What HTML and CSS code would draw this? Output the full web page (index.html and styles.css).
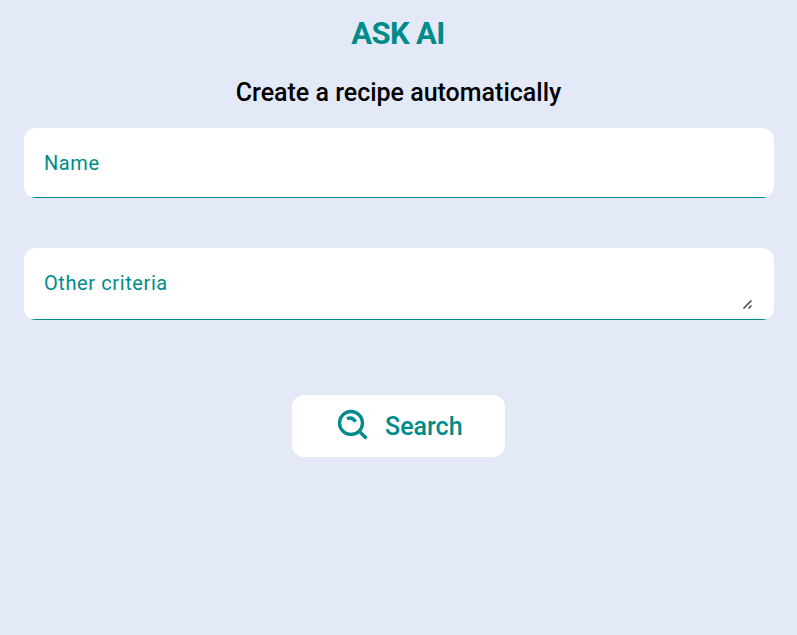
FILE: index.html
```html
<!DOCTYPE html>
<html lang="en">
<head>
<meta charset="utf-8">
<title>Ask AI</title>
<link rel="stylesheet" href="styles.css">
</head>
<body>
<main class="page">
  <h1 class="title">ASK AI</h1>
  <h2 class="subtitle">Create a recipe automatically</h2>
  <form class="form">
    <div class="field field-name"><span class="label">Name</span></div>
    <div class="field field-criteria">
      <span class="label">Other criteria</span>
      <svg class="grip" viewBox="0 0 10 10"><path d="M0.5 8.500 8.500 0.500M5.500 8.500 8.500 5.500"/></svg>
    </div>
    <button class="search" type="button">
      <svg class="icon" viewBox="0 0 32 32"><circle cx="14" cy="14" r="11.5"/><path d="M22 22 29.500 29.500M10 9.700Q15.500 7.300 18.500 12.700"/></svg>
      <span class="search-text">Search</span>
    </button>
  </form>
</main>
</body>
</html>
```
FILE: styles.css
```css
* { box-sizing: border-box; }
body { margin: 0; min-height: 635px; background: #e3e9f7; font-family: Roboto, sans-serif; }
.page { padding: 14px 23px 0 24px; }
.title { margin: 0 2px 0 0; height: 40px; line-height: 39px; font-size: 31px; font-weight: 700; letter-spacing: -0.6px; text-align: center; color: #008b8b; }
.subtitle { margin: 22px 1px 0 0; height: 32px; line-height: 33px; font-size: 25px; font-weight: 500; text-align: center; color: #000; }
.form { margin-top: 20px; display: flex; flex-direction: column; }
.field { display: flex; justify-content: space-between; padding: 0 20px; border-radius: 12px; background: linear-gradient(#008b8b, #008b8b) bottom / 100% 1px no-repeat #fff; }
.field-name { height: 70px; }
.field-criteria { height: 72px; margin-top: 50px; }
.label { line-height: 70px; font-size: 20px; letter-spacing: 0.6px; color: #008b8b; }
.grip { width: 10px; height: 10px; margin: 52px 1px 0 0; fill: none; stroke: #555; stroke-width: 1.7; }
.search { align-self: center; display: flex; align-items: center; gap: 16px; width: 213px; height: 62px; margin: 75px 1px 0 0; padding: 0 42px 0 45px; border: 0; border-radius: 12px; background: #fff; color: #008b8b; font: 500 25px/62px Roboto, sans-serif; }
.search-text { padding-top: 2px; line-height: 60px; }
.icon { width: 32px; height: 32px; margin-top: -2px; flex: none; fill: none; stroke: currentColor; stroke-width: 3.3; }
```
